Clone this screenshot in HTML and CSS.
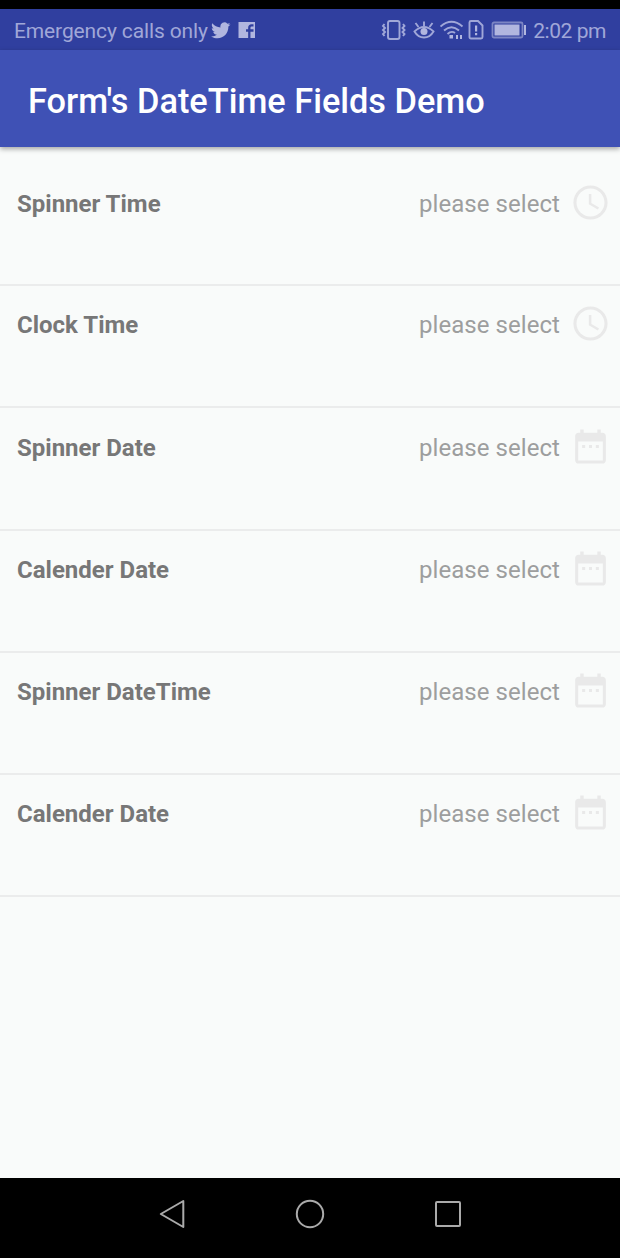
FILE: index.html
```html
<!DOCTYPE html>
<html lang="en">
<head>
<meta charset="utf-8">
<title>Form's DateTime Fields Demo</title>
<link rel="stylesheet" href="styles.css">
</head>
<body>
<svg class="defs" aria-hidden="true">
  <symbol id="clock" viewBox="0 0 24 24"><path d="M11.99 2C6.47 2 2 6.48 2 12s4.47 10 9.99 10C17.52 22 22 17.52 22 12S17.52 2 11.99 2zM12 20.200c-4.500 0-8.200-3.700-8.200-8.200s3.700-8.200 8.200-8.200 8.200 3.700 8.200 8.200-3.700 8.200-8.200 8.200zm.5-13.200H11v6l5.250 3.150.75-1.230-4.500-2.670z"/></symbol>
  <symbol id="calendar" viewBox="0 0 24 24"><path d="M8.900 11.100H7.100v1.800h1.800zm4 0h-1.800v1.800h1.800zm4 0h-1.800v1.800h1.800zM19 4h-1V2h-2v2H8V2H6v2H5c-1.110 0-1.990.9-1.990 2L3 20c0 1.100.89 2 2 2h14c1.100 0 2-.9 2-2V6c0-1.100-.9-2-2-2zm.2 16.200H4.800V9h14.400v11.200z"/></symbol>
</svg>
<div class="screen">
  <div class="status">
    <span class="carrier">Emergency calls only</span>
    <svg class="twitter" width="20" height="17" viewBox="0 0 20 17"><path d="M19.500 2.300q-1 .5-2.200.6 1.100-.8 1.600-2-1.200.7-2.500.9A4 4 0 0 0 9.500 5.400Q4.500 5.200 1.300 1.300C.3 3 .9 5.300 2.600 6.500q-1 0-1.800-.5c0 2 1.400 3.500 3.200 3.900q-.9.200-1.800.1c.5 1.500 1.900 2.700 3.700 2.700Q3.300 14.700 0 14.400c9 5 17.500-.8 17.400-10q1.300-.8 2.100-2.100z"/></svg>
    <svg class="facebook" width="18" height="18" viewBox="0 0 18 18"><path d="M.5 1h16.500v16H.5z"/><path class="mark" d="M11.300 17V6.800q0-2.500 2.400-2.500h1.800M8 9.500h7.500"/></svg>
    <span class="spacer"></span>
    <svg class="vibrate" width="26" height="22" viewBox="0 0 26 22"><g class="line"><rect x="7" y="2" width="11.500" height="18" rx="2"/><path d="M3.500 5 2 7l2 2-2 2 2 2-2 2 1.500 2M22 5l1.500 2-2 2 2 2-2 2 2 2-1.500 2"/></g></svg>
    <svg class="eye" width="22" height="22" viewBox="0 0 22 22"><g class="line"><path d="M1.500 12.500Q11 3.500 20.500 12.500 17 18.500 11 18.500T1.500 12.500zM11 7V2.500M5.500 8 2.500 4M16.500 8l3-4"/></g><circle cx="11" cy="12.500" r="3.500"/></svg>
    <svg class="wifi" width="24" height="22" viewBox="0 0 24 22"><g class="line"><path d="M.5 7.500Q11.500-2 22.500 7.500M4 11.500Q11.500 4.800 19 11.500M7.500 15Q11.500 11.300 15 14"/></g><path d="M9.500 16H13v3.500H9.500zM16 16h2v4h-2zM20 16h2v4h-2z"/></svg>
    <svg class="sim" width="16" height="22" viewBox="0 0 16 22"><path class="line" d="M3 2h7l4.500 4.500V18q0 1.500-1.500 1.500H3Q1.500 19.500 1.500 18V3.500Q1.500 2 3 2z"/><path d="M7 6.500h2.200v6H7zM7 14h2.200v2.200H7z"/></svg>
    <svg class="battery" width="36" height="18" viewBox="0 0 36 18"><rect class="outline" x="1.500" y="1.500" width="30" height="15" rx="1.500"/><path d="M3.500 3.500h25v11h-25zM33 4h2v10h-2z"/></svg>
    <span class="time">2:02 pm</span>
  </div>
  <header class="bar"><h1 class="title">Form's DateTime Fields Demo</h1></header>
  <main class="form">
    <div class="row"><span class="label">Spinner Time</span><span class="value">please select</span><svg class="icon"><use href="#clock"/></svg></div>
    <div class="row"><span class="label">Clock Time</span><span class="value">please select</span><svg class="icon"><use href="#clock"/></svg></div>
    <div class="row"><span class="label">Spinner Date</span><span class="value">please select</span><svg class="icon"><use href="#calendar"/></svg></div>
    <div class="row"><span class="label">Calender Date</span><span class="value">please select</span><svg class="icon"><use href="#calendar"/></svg></div>
    <div class="row"><span class="label">Spinner DateTime</span><span class="value">please select</span><svg class="icon"><use href="#calendar"/></svg></div>
    <div class="row"><span class="label">Calender Date</span><span class="value">please select</span><svg class="icon"><use href="#calendar"/></svg></div>
  </main>
  <nav class="nav">
    <svg width="30" height="32" viewBox="0 0 30 32"><path d="M26.300 3v26L3.800 16z"/></svg>
    <svg width="30" height="32" viewBox="0 0 30 32"><circle cx="15" cy="16" r="13.200"/></svg>
    <svg width="30" height="32" viewBox="0 0 30 32"><rect x="3" y="4" width="24" height="24" rx="1"/></svg>
  </nav>
</div>
</body>
</html>
```
FILE: styles.css
```css
body {
  margin: 0;
  background: #000;
  font-family: Roboto, sans-serif;
}
.defs {
  display: none;
}
.screen {
  box-sizing: border-box;
  width: 620px;
  height: 1258px;
  padding-top: 9px;
  display: flex;
  flex-direction: column;
  overflow: hidden;
}
.status {
  box-sizing: border-box;
  height: 41px;
  flex: none;
  display: flex;
  align-items: center;
  padding: 1px 14px 0 14px;
  background: #303f9f;
  color: #a0a7d8;
  fill: #b1b6df;
  font-size: 21px;
  white-space: nowrap;
}
.status svg {
  flex: none;
}
.carrier,
.time {
  padding-top: 2px;
}
.carrier {
  letter-spacing: -0.130px;
}
.line {
  fill: none;
  stroke: #a0a7d8;
  stroke-width: 1.900;
}
.outline {
  fill: none;
  stroke: #7c85c4;
  stroke-width: 1.800;
}
.mark {
  fill: none;
  stroke: #303f9f;
  stroke-width: 2.300;
}
.twitter {
  margin-left: 3px;
}
.facebook {
  margin-left: 7px;
}
.spacer {
  flex: 1;
}
.eye {
  margin-left: 6px;
}
.wifi {
  margin-left: 5px;
}
.sim {
  margin-left: 4px;
}
.battery {
  margin-left: 7px;
}
.time {
  margin-left: 6px;
  letter-spacing: -0.450px;
}
.bar {
  height: 97px;
  flex: none;
  display: flex;
  align-items: center;
  padding-left: 28px;
  background: #3f51b5;
  box-shadow: 0 2px 5px rgba(0, 0, 0, 0.35);
  z-index: 1;
}
.title {
  margin: 5px 0 0;
  color: #fff;
  font-size: 34.350px;
  font-weight: 500;
  white-space: nowrap;
}
.form {
  flex: 1;
  padding-top: 17.400px;
  background: #f9fbfa;
}
.row {
  box-sizing: border-box;
  height: 122.200px;
  display: flex;
  align-items: flex-start;
  padding: 17.200px 9px 0 17px;
  border-bottom: 2px solid #ebecec;
  font-size: 24px;
  line-height: 44px;
  white-space: nowrap;
}
.row:first-child {
  height: 121.800px;
}
.label {
  flex: 1;
  color: #777;
  font-weight: 700;
}
.value {
  color: #9d9e9e;
  letter-spacing: 0.060px;
}
.icon {
  width: 41px;
  height: 41px;
  margin-left: 10px;
  fill: #e9e9e9;
}
.nav {
  height: 80px;
  flex: none;
  box-sizing: border-box;
  display: flex;
  justify-content: center;
  gap: 108px;
  padding-top: 20px;
  background: #000;
  fill: none;
  stroke: #aaa;
  stroke-width: 2;
  stroke-linejoin: round;
}
```
